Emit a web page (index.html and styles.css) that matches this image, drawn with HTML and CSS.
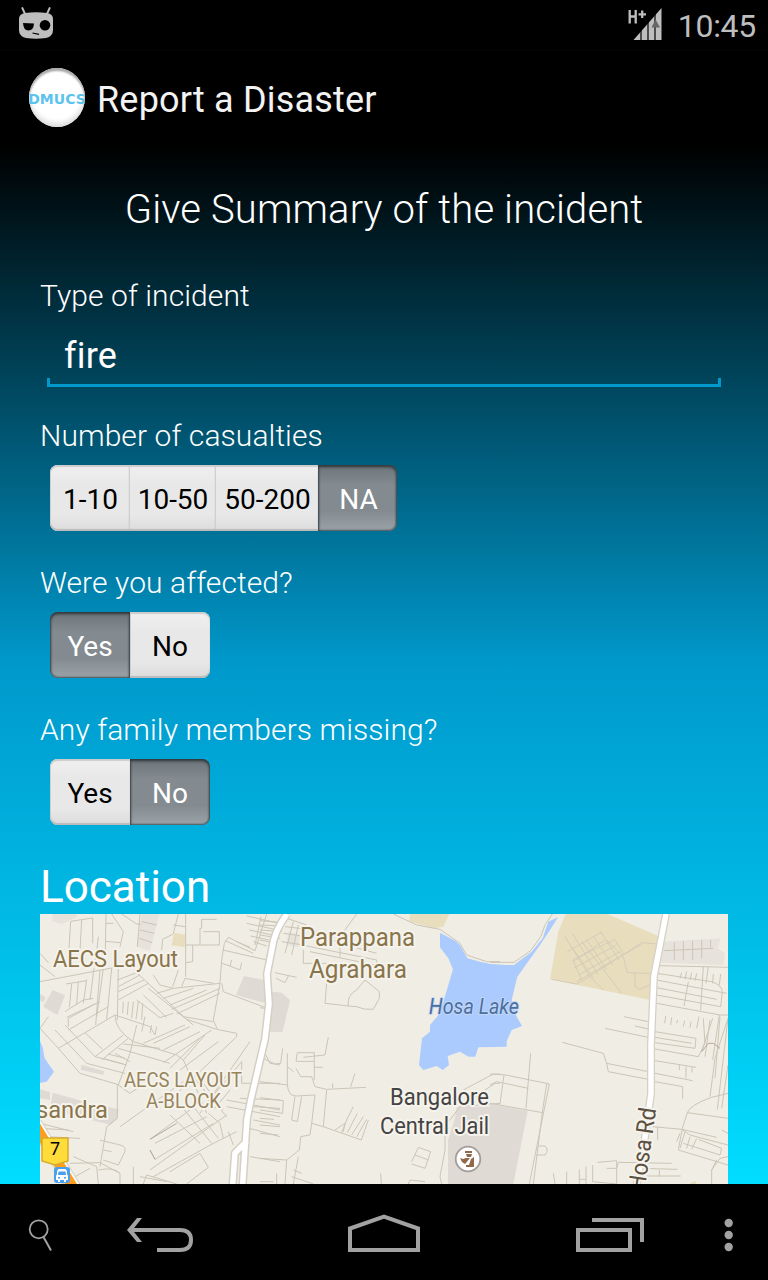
FILE: index.html
```html
<!DOCTYPE html>
<html lang="en">
<head>
<meta charset="utf-8">
<title>Report a Disaster</title>
<link rel="stylesheet" href="styles.css">
</head>
<body>
<div class="phone">
  <header class="status">
    <svg class="cyan" width="38" height="36" viewBox="0 0 38 36">
      <path d="M5.300 4l3 6.500M32.700 4l-3 6.500" stroke="#bebebe" stroke-width="1.900" stroke-linecap="round"/>
      <path d="M2 15Q2 10 8 9Q19 7.500 30 9Q36 10 36 15V26Q36 32.500 29 34Q19 35.500 9 34Q2 32.500 2 26Z" fill="#bebebe"/>
      <path d="M6 19L17 19.500Q16.500 26.500 11.500 26.500Q6.500 26.500 6 19Z"/>
      <circle cx="28" cy="21.200" r="5.300"/>
      <path d="M15.500 29L22 30.300" stroke="#000" stroke-width="1.200"/>
    </svg>
    <div class="status-right">
      <svg width="36" height="36" viewBox="0 0 36 36">
        <path d="M2.700 6V19.500M8.700 6V19.500M2.700 12.500H8.700M11.500 10.300H19M15.200 6.500V14" stroke="#bebebe" stroke-width="2.300" fill="none"/>
        <path d="M6.500 36L34.500 4V36Z" fill="#bebebe"/>
        <path d="M14 24V36M21 16V36M28 8V36" stroke="#000" stroke-width="1.200"/>
        <path d="M28.500 15.500L33 23.500H24.500Z" fill="#666"/>
      </svg>
      <span class="clock">10:45</span>
    </div>
  </header>
  <div class="actionbar">
    <div class="logo"><span>DMUCS</span></div>
    <h1 class="title">Report a Disaster</h1>
  </div>
  <main class="content">
    <h2 class="heading">Give Summary of the incident</h2>
    <div class="label type">Type of incident</div>
    <div class="input"><span>fire</span></div>
    <div class="label casualties">Number of casualties</div>
    <div class="segments">
      <button class="seg num w79">1-10</button><button class="seg num w86">10-50</button><button class="seg num w103">50-200</button><button class="seg on num w79">NA</button>
    </div>
    <div class="label affected">Were you affected?</div>
    <div class="segments">
      <button class="seg on w80">Yes</button><button class="seg w80">No</button>
    </div>
    <div class="label missing">Any family members missing?</div>
    <div class="segments">
      <button class="seg w80">Yes</button><button class="seg on w80">No</button>
    </div>
    <h3 class="location">Location</h3>
    <svg class="map" width="688" height="270" viewBox="0 0 688 270">
      <rect width="688" height="270" fill="#f0ede5"/>
      <!-- blocks, water and minor streets: west -->
      <g transform="translate(0 -4) scale(.33333)">
        <path class="built" d="M38 240L75 256L52 315L10 290ZM612 198L690 214L678 280L588 255ZM690 245L725 248L750 270L728 365H690ZM125 464L192 484L190 495L122 479ZM0 252L17 262L10 276L0 272ZM0 538L30 546V570L0 565ZM38 548L150 580L236 598L232 625L212 644L30 600Z"/>
        <path class="faint" d="M38 12H110V22L65 42L36 34ZM305 12H358L330 122L290 110Z"/>
        <path fill="#e8debd" d="M402 68L436 74L434 112L395 106Z"/>
        <path class="water" d="M0 393L8 412L14 445L42 485L20 515L0 519Z"/>
        <path class="street" d="M92 34L158 24V100M92 34L86 130M125 30L120 120M175 80L165 170M198 12L196 120M215 12L250 65L240 110M198 40H220M196 94L240 98M245 12L290 42H304M300 12L292 110M305 35L350 45M300 60L343 70M298 85L337 98M415 12L400 70M437 12V200M400 72L368 88L365 120M400 45L437 50M480 105V55H485V28H530M490 65H538V105H437M458 105V155L437 158M553 100L545 150L540 220L520 330L532 358M553 100L565 82L645 122L680 12M556 92L640 130M548 120L690 152M590 95L630 112M620 18L710 38M620 40L704 58M628 60L696 75M632 78L687 90M640 95L680 108M663 20L645 105M545 160L570 168L575 150M570 168L600 180L605 158M0 130L25 158M0 165L45 200M0 215L236 170M78 222L140 212M95 222L88 292M115 215L110 285M140 208L130 280M162 175L150 270M190 175L170 320M215 175L200 328M235 172L232 330M180 180L167 345M75 305L130 270L160 265M80 322L180 275M85 350V325L165 282M85 360L205 290M55 415L225 315M0 355L25 320M0 355L55 415L120 490L235 524M45 360L140 460L255 490M75 345L165 440L260 465M135 368L188 418M165 440L250 375M185 450L265 385M188 445L250 462M205 432L255 445M235 415L390 460M225 430L270 455M250 402L360 415M225 315L330 350L345 375M225 315Q225 360 280 395L410 435L430 450M235 270L325 220M235 245L312 210M235 230L300 195M232 210L290 188M290 188L440 328L530 358L590 370V380L390 570M340 195L360 225L400 235L540 220M398 230L415 180M425 230L435 205L520 220M325 235L460 345M310 255L380 323M290 270L360 323L400 310M350 250L400 235M370 265L460 235M390 285L500 240M395 298L540 235M410 312L540 250M545 220L550 245L690 298M430 320L520 335M290 345L270 430L235 525M305 365L315 320M330 370L335 345M345 375L350 350M250 275L248 310M265 275L262 315M280 275L275 325M295 275L288 328M308 280L305 330M310 400L435 345M340 400L450 350M370 420L480 365M370 458L515 360M390 475L480 385M430 450L495 375M420 480L535 395M430 450L475 550L500 610M450 490L560 620M490 520L550 600M480 610L630 395M500 580L605 455V520M520 600L570 540M240 650L430 515M330 688L450 600M345 700L500 620M330 720L345 748L520 640M330 780L560 615M340 800L520 700L590 665M390 785L480 730L505 772L440 822M390 615L480 700M425 590L515 700M460 590L535 685M505 610L540 640L550 685M565 665L580 705M232 525V625L200 650L180 770M235 525L270 550L300 530M0 655L85 660M20 680L120 685M180 690L240 705Q265 710 250 735L235 765L190 750M190 720L215 725M90 760L180 758L240 790M100 740L170 770L175 822M65 822L150 775M240 822V790Q220 770 175 780M280 822V770M300 800L380 815M310 822L320 795L410 822M0 640L100 665M605 520H720M560 570L720 600M560 590L720 620M600 565L720 570M610 650L720 680M640 590L720 595M640 630L720 645M630 740L720 755M675 430L690 460L720 465"/>
        <path class="street dark" d="M330 688L410 640M330 720L345 748"/>
      </g>
      <!-- centre -->
      <g transform="translate(220 -4) scale(.33333)">
        <path fill="#e8debd" d="M450 12H568L550 50L520 55L447 34Z"/>
        <path class="faint" d="M85 65L120 75L115 112L80 105Z"/>
        <path class="built" d="M40 245L62 250L65 262L88 270L64 365H32ZM590 590H720V822H564V690L585 625Z"/>
        <path class="street" d="M0 75L60 85M0 60L65 65M0 45L65 48M0 32L70 38M0 90L50 100M65 95L130 105M70 70L125 78M75 50L160 60L240 100L350 130M100 35L75 130M115 45L95 135M80 25L140 45M290 12L240 80V110M125 105L350 150V180M150 125L345 165M130 120V160L200 160M240 110V140M200 220L195 280L265 288M265 288Q260 255 290 240L315 210L358 245V265L340 298Q310 300 290 290L265 288M45 188L110 202M48 205L75 218L85 198M0 293L25 297M68 415L62 460L45 462L0 440M0 515L82 525V430M82 470L100 485M82 525Q85 560 110 558L165 555L155 640L150 675L122 680L118 720L80 750L0 745M112 428H163V454H108ZM130 442L195 435L205 382M163 454V510M163 472H188M108 475L122 500H155L165 530L200 538L318 532M218 535V520M272 530L285 490M105 560L95 630L112 635L125 560M200 540L190 650M155 640L190 650L304 690L325 630M245 668L262 625L280 590M262 668L292 610M275 675L310 620M290 680L320 628M225 660L255 640L250 665M0 563L70 572L68 610L0 600M0 625L42 628M0 645L60 650M0 670L55 675M455 755L475 712L512 725L495 775L455 762M465 735L505 750M400 12L470 45L540 58L600 100L620 135L680 155H720M610 540L700 492H720M600 590L705 520H720M555 650V720L540 800L545 822M555 650L600 590L720 580M364 822L362 790M445 822L450 810L495 815M115 740L100 822M80 750L75 822M100 780L125 790M95 800L160 822M0 815H40M50 790V822"/>
        <path class="water" d="M540 68L585 92L600 105L622 145L660 155L690 162L740 165V410L655 412L646 440H625L600 425L563 438L567 465L548 480L530 468L490 480L477 465L486 385L510 365V345L540 310L579 178L565 145L540 112Z"/>
      </g>
      <!-- east -->
      <g transform="translate(450 -4) scale(.33333)">
        <path fill="#e8debd" d="M227 12H352L505 78L490 272L180 208L205 65Z"/>
        <path class="faint" d="M515 95L692 85L683 115L705 130L700 165L510 158Z"/>
        <path class="built" d="M0 582L113 602L70 822H0Z"/>
        <path class="street pale" d="M185 208L260 222L290 205L455 98L500 102M260 215L455 103M225 80L300 200L340 240M248 72L325 195M275 95L395 250M290 88L350 180M310 78L368 165M332 65L388 152M350 90L400 140L412 188L480 190M375 90L400 130M248 150L375 88M232 125L335 66M250 155L345 90M250 175L380 105M265 195L390 125M248 150L275 210M435 188V230L448 238L480 225M245 110L310 205"/>
        <path class="street" d="M523 122L670 115M553 97V150M580 94V150M608 92V150M635 90V145M662 90V112M0 157H72L122 122L152 80L165 45L187 12M508 167L720 172M500 190L665 215Q695 225 697 245L692 290L500 255M500 210L710 250M500 233L680 268M500 280L690 315H714M595 215L582 288M640 170L632 300M655 170L648 220M570 205L575 188M585 208L590 185M600 210L605 188M615 212L620 190M668 220L670 192M688 225L692 192M524 340L527 318M542 345L545 322M560 340L563 330M580 350L584 332M600 353L603 335M620 355L627 320M402 320L475 335M345 355L475 382M435 348L475 357M217 397L340 430L350 460L475 485M350 460L355 485L475 508M495 365L618 385L615 415L495 398M495 382L605 400M495 417L625 440L645 400L640 325M495 452L618 472M495 490L608 512M495 515L578 530V566M568 465V480M588 470V505M606 470V487M645 440L660 330M668 450L688 315M660 560L675 445L714 325M682 598L714 325M695 595L714 465M675 505L690 320M635 425L668 325M0 492L48 495L178 522L118 822M170 522L158 600L130 822M122 430L108 595M42 495L30 582M0 525L20 515L115 535M0 580L158 608M145 708H165Q178 720 165 735H138M488 650L575 658L680 682M714 550L665 562Q600 585 592 608L577 655M592 608L714 625M575 658L600 675L714 705M570 670L560 695M577 655L565 720L714 765M585 665L570 715M580 700L690 735L695 715L625 688M600 680L590 715M620 685L605 718M503 650V690M695 660L714 670M680 750L665 780V822M322 757L380 752V822L308 815V765M350 775H380L385 757L545 760M268 822V778M288 822V770M268 808H288M190 790L195 822M230 785V822M450 775L562 778M450 798H572M508 780V800M714 740L690 745L665 780"/>
        <path class="street dark" d="M635 425L655 400H670L690 415"/>
        <path class="water" d="M0 165H72L125 125L158 85L175 35L204 22L180 60L150 105L82 200L65 270L80 320L96 348L65 360L43 408L-10 410V160Z"/>
        <path fill="#e8debd" d="M598 822L615 812L620 822Z"/>
      </g>
      <!-- main roads -->
      <g fill="none" stroke-linejoin="round">
        <path d="M247 0Q234 17 232 35L227 60L229 90L225 125L211 185L207 205L202 280M207 227L195 239L192 280" stroke="#d5cfc5" stroke-width="8.500"/>
        <path d="M626 0L614 62L611 130V180L604 230L595 280" stroke="#d5cfc5" stroke-width="8"/>
        <path d="M247 0Q234 17 232 35L227 60L229 90L225 125L211 185L207 205L202 280M207 227L195 239L192 280M626 0L614 62L611 130V180L604 230L595 280" stroke="#fff" stroke-width="5.500"/>
        <path d="M-7 206L37 278" stroke="#d5cfc5" stroke-width="14"/><path d="M-7 206L37 278" stroke="#fff" stroke-width="12"/>
        <path d="M-8 206L36 278" stroke="#ff9d20" stroke-width="10"/>
      </g>
      <g class="place">
        <text x="13" y="53" textLength="125" lengthAdjust="spacingAndGlyphs">AECS Layout</text>
        <text x="-4" y="204" textLength="72" lengthAdjust="spacingAndGlyphs">sandra</text>
        <text class="big" x="260" y="31.500" textLength="115" lengthAdjust="spacingAndGlyphs">Parappana</text>
        <text class="big" x="269" y="63.500" textLength="98" lengthAdjust="spacingAndGlyphs">Agrahara</text>
        <text class="small" x="84" y="172.500" textLength="118" lengthAdjust="spacingAndGlyphs">AECS LAYOUT</text>
        <text class="small" x="106" y="193.500" textLength="75" lengthAdjust="spacingAndGlyphs">A-BLOCK</text>
        <text class="lake" x="389" y="100" textLength="90" lengthAdjust="spacingAndGlyphs">Hosa Lake</text>
        <text class="jail" x="350" y="191" textLength="99" lengthAdjust="spacingAndGlyphs">Bangalore</text>
        <text class="jail" x="340" y="220" textLength="109" lengthAdjust="spacingAndGlyphs">Central Jail</text>
        <text class="jail road" transform="translate(604.500 278) rotate(-82)" textLength="84" lengthAdjust="spacingAndGlyphs">Hosa Rd</text>
      </g>
      <circle cx="428" cy="245" r="12.300" fill="#fff" stroke="#a39d98" stroke-width="1.800"/>
      <path d="M425 237H432V239H425ZM426 240H432L431 243H427ZM420 244L423 245L426 244L430 244L425 250L422 248ZM431 245L434 243V253H426V251H429Z" fill="#936846"/>
      <path d="M2 224H28V247L15 251L2 247Z" fill="#ffdc39" stroke="#d9ab2c" stroke-width="1.500"/>
      <text class="shield" x="10" y="241">7</text>
      <rect x="14" y="253" width="16" height="16" rx="3" fill="#4ba0ee"/>
      <path d="M18.500 255H25.500L27 257V260L28 262V266H26V268H24V266H20V268H18V266H16V262L17 260V257Z" fill="#fff"/>
      <path d="M18.500 257.500H25.500L26 261H18Z" fill="#4ba0ee"/><path d="M18 263.700h2M24 263.700h2" stroke="#4ba0ee" stroke-width="1.500"/>
    </svg>
  </main>
  <nav class="navbar">
    <svg width="768" height="96" viewBox="0 0 768 96" fill="none" stroke="#a2a2a2">
      <circle cx="38.700" cy="45.300" r="9" stroke-width="1.800"/>
      <path d="M43.500 53L51 66.500" stroke-width="2"/>
      <path d="M131 46H180Q191 46 191 56Q191 66 180 66H157" stroke-width="4"/>
      <path d="M137 34H142L132.500 46L142 58H137L127 46Z" fill="#a2a2a2" stroke="none"/>
      <path d="M350 66V44.500L384 32.500L418 44.500V66Z" stroke-width="4"/>
      <path d="M578 46H630V66H578ZM592 36H642V58" stroke-width="4"/>
      <g fill="#a2a2a2" stroke="none"><circle cx="728.700" cy="39" r="4.200"/><circle cx="728.700" cy="51" r="4.200"/><circle cx="728.700" cy="63" r="4.200"/></g>
    </svg>
  </nav>
</div>
</body>
</html>
```
FILE: styles.css
```css
* { box-sizing: border-box; }
body { margin: 0; background: #000; font-family: Roboto, sans-serif; color: #fff; }
.phone { width: 768px; height: 1280px; display: flex; flex-direction: column; overflow: hidden; }

.status { height: 51px; display: flex; justify-content: space-between; padding: 4px 12px 0 17px; border-bottom: 1px solid #050505; }
.status-right { display: flex; gap: 15px; }
.clock { font-size: 32px; line-height: 44px; color: #bebebe; letter-spacing: -.3px; }

.actionbar { height: 95px; display: flex; align-items: center; gap: 12px; padding: 0 29px; }
.logo { width: 56px; height: 59px; border-radius: 50%; margin-bottom: 2px; overflow: hidden; display: flex; align-items: center; justify-content: center; background: #fff; box-shadow: inset 0 3px 2px #aaa, inset 0 -4px 5px #ddd; }
.logo span { font: bold 14px "DejaVu Sans", sans-serif; color: #5cc2ee; padding-top: 3px; }
.title { margin: 2px 0 0; font-size: 36px; font-weight: 400; color: #f3f3f3; white-space: nowrap; letter-spacing: .18px; }

.content { height: 1038px; padding: 0 40px; background: linear-gradient(#000, #0099cc 50%, #00ddff); display: flex; flex-direction: column; }
.heading { margin: 39px 0 0; height: 50px; line-height: 50px; font-size: 40px; font-weight: 300; text-align: center; white-space: nowrap; letter-spacing: .11px; }
.label { font-size: 30px; font-weight: 300; line-height: 36px; height: 36px; white-space: nowrap; align-self: flex-start; letter-spacing: .08px; }
.type { margin-top: 43px; }
.input { height: 70px; margin: 3px 7px 0; padding: 15px 17px 0; line-height: 48px; font-size: 36px; letter-spacing: .2px; background: linear-gradient(#0099cc, #0099cc) 0 100% / 3px 9px no-repeat, linear-gradient(#0099cc, #0099cc) 100% 100% / 3px 9px no-repeat, linear-gradient(#0099cc, #0099cc) 0 100% / 100% 3px no-repeat; }
.casualties { margin-top: 31px; }
.affected, .missing { margin-top: 34px; }

.segments { height: 66px; margin: 11px 0 0 10px; display: flex; }
.seg { height: 66px; border: 0; padding: 2px 0 0; font: 28px Roboto, sans-serif; color: #000; white-space: nowrap; background: linear-gradient(#f0f0f0, #e8e8e8 30%, #e8e8e8 75%, #dcdcdc); box-shadow: inset 0 2px 1px #ccc, inset 0 -2px 1px #bbb, inset 1px 0 #d3d3d3; }
.seg.num { padding-left: 2px; }
.seg:first-child { border-radius: 8px 0 0 8px; }
.seg:last-child { border-radius: 0 8px 8px 0; }
.seg.on { color: #fff; background: linear-gradient(#6c7479, #838b91 30%, #838b91 70%, #9ba3a9); box-shadow: inset 0 2px 3px #30383c, inset 0 0 2px 1px #4b5358; }
.w79 { width: 79px; }
.w80 { width: 80px; }
.w86 { width: 86px; }
.w103 { width: 103px; }

.location { margin: 34px 0 0; height: 55px; line-height: 56px; font-size: 44px; font-weight: 400; align-self: flex-start; }
.map { display: block; flex: none; }
.street { fill: none; stroke: #cbc5b6; stroke-width: 3; }
.street.dark { stroke: #b3a898; }
.street.pale { stroke: #d5ccb9; }
.built { fill: #dfdad4; }
.faint { fill: #e7e2dc; }
.water { fill: #abcbff; }
.place text { font-size: 24px; fill: #89754b; stroke: #f6f3ec; stroke-width: 4px; stroke-linejoin: round; paint-order: stroke; }
.place .big { font-size: 25px; }
.place .small { font-size: 20px; fill: #97855c; }
.place .lake { font-size: 22px; font-style: italic; fill: #4d6f9f; stroke: #c3d8f7; stroke-width: 2px; }
.place .jail { fill: #444; }
.place .road { fill: #5b5041; }
.shield { font-size: 18px; fill: #000; }

.navbar { height: 96px; background: #000; }
.navbar svg { display: block; }
```
